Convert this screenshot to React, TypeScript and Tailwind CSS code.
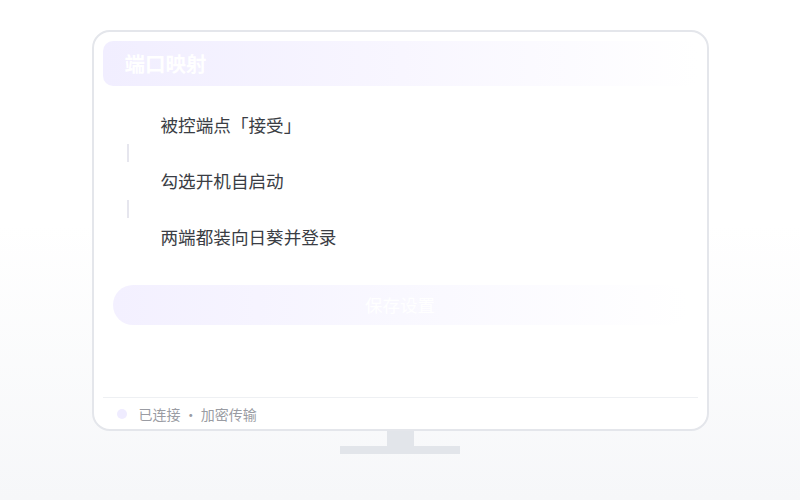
import React from "react";

const steps = ["被控端点「接受」", "勾选开机自启动", "两端都装向日葵并登录"];

export default function App() {
  return (
    <div
      className="w-[800px] h-[500px] bg-gradient-to-b from-white from-45% to-[#f6f7f9] flex flex-col items-center pt-[30px]"
      style={{ fontFamily: '"Noto Sans CJK SC", "Noto Sans", sans-serif' }}
    >
      <div className="w-[617px] h-[401px] border-2 border-[#e4e6eb] rounded-[18px] bg-white flex flex-col px-[9px] pt-[9px]">
        <div className="h-[45px] rounded-[10px] bg-gradient-to-r from-[#f1eeff] via-[#f8f6ff] to-white flex items-center pl-[22px] pr-[20px] justify-between">
          <span className="text-white text-[20.5px] font-semibold leading-none">端口映射</span>
          <span className="text-white text-[14px]">⋯</span>
        </div>

        <div className="mt-[20px] flex flex-col">
          {steps.map((s, i) => (
            <div key={i} className="flex flex-col">
              <div className="h-[38px] flex items-center">
                <div className="w-[28px] h-[28px] ml-[11px] rounded-full bg-white" />
                <span className="ml-[19px] text-[17.6px] text-[#3a3d44] leading-none">{s}</span>
              </div>
              {i < steps.length - 1 && (
                <div className="h-[18px] w-[2px] ml-[24px] bg-[#e6e6ee]" />
              )}
            </div>
          ))}
        </div>

        <div className="mt-[29px] mx-[10px] h-[40px] rounded-full bg-gradient-to-r from-[#f3f0ff] via-[#f9f8ff] to-white flex items-center justify-center">
          <span className="text-white text-[17.5px] leading-none">保存设置</span>
        </div>

        <div className="mt-auto h-[32px] border-t border-[#eef0f3] flex items-center pl-[14px]">
          <div className="w-[10px] h-[10px] rounded-full bg-[#efecff]" />
          <span className="ml-[12px] text-[14px] text-[#9a9ca3] leading-none">已连接 · 加密传输</span>
        </div>
      </div>
      <div className="w-[27px] h-[15px] bg-[#e2e5ea]" />
      <div className="w-[120px] h-[8px] bg-[#e2e5ea]" />
    </div>
  );
}
